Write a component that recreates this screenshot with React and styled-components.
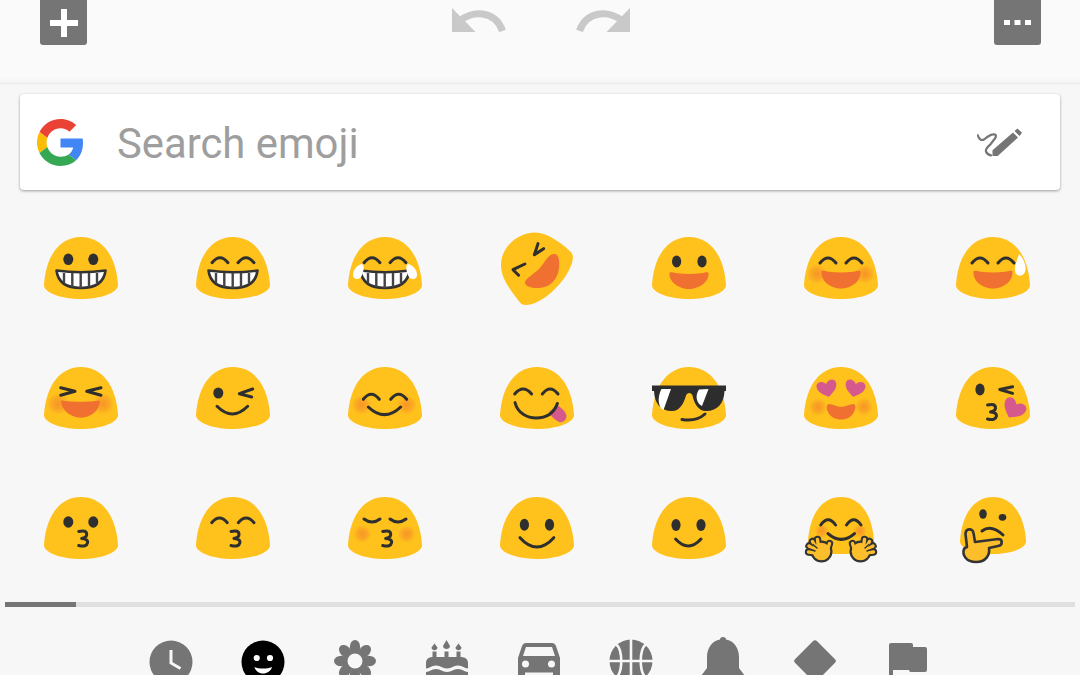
import React, { useId } from 'react';
import styled, { createGlobalStyle } from 'styled-components';

const DARK = '#2f2f2f';
const ORANGE = '#ef7030';
const PINK = '#d6598e';
const YELLOW = '#ffc11c';

const GlobalStyle = createGlobalStyle`
  html, body {
    margin: 0;
    padding: 0;
    background: #f7f7f7;
    overflow: hidden;
  }
`;

const Page = styled.div`
  width: 1080px;
  height: 675px;
  overflow: hidden;
  background: #f7f7f7;
  font-family: Roboto, "Liberation Sans", sans-serif;
`;

const Toolbar = styled.header`
  height: 83px;
  box-sizing: border-box;
  padding: 0 39px 0 40px;
  display: flex;
  justify-content: space-between;
  align-items: flex-start;
  background: linear-gradient(#fafafa 92%, #f4f4f4);
  box-shadow: 0 1px 1px rgba(0, 0, 0, 0.05);
`;

const ToolButton = styled.div`
  width: 47px;
  height: 45px;
  display: flex;
  align-items: center;
  justify-content: center;
  background: #757575;
  border-radius: 0 0 3px 3px;
`;

const HistoryGroup = styled.div`
  display: flex;
  gap: 70px;
  padding-top: 8px;
`;

const HistoryIcon = styled.svg`
  width: 54px;
  height: 24px;
  display: block;
  transform: ${p => (p.$flip ? 'scaleX(-1)' : 'none')};
`;

const SearchCard = styled.div`
  height: 96px;
  margin: 11px 20px 0;
  padding: 0 37px 0 17px;
  display: flex;
  align-items: center;
  background: #fff;
  border-radius: 4px;
  box-shadow: 0 1px 3px rgba(0, 0, 0, 0.38);
`;

const GoogleMark = styled.svg`
  width: 47px;
  height: 47px;
  flex: none;
`;

const SearchText = styled.span`
  flex: 1;
  margin-left: 33px;
  padding-top: 2px;
  font-size: 41.8px;
  color: #9e9e9e;
`;

const HandwriteIcon = styled.svg`
  width: 46px;
  height: 29px;
  flex: none;
`;

const EmojiGrid = styled.div`
  margin-top: 13px;
  padding-left: 5px;
  display: grid;
  grid-template-columns: repeat(7, 152px);
  grid-auto-rows: 130px;
`;

const EmojiCell = styled.div`
  display: flex;
  align-items: center;
  justify-content: center;
`;

const EmojiSvg = styled.svg`
  width: 74px;
  height: 62px;
  overflow: visible;
`;

const ScrollTrack = styled.div`
  height: 5px;
  margin: 9px 5px 0;
  background: #e0e0e0;
`;

const ScrollThumb = styled.div`
  width: 71px;
  height: 5px;
  background: #757575;
`;

const TabBar = styled.nav`
  margin-top: 33px;
  padding-right: 2px;
  display: flex;
  justify-content: center;
`;

const Tab = styled.div`
  width: 92px;
  display: flex;
  justify-content: center;
`;

const TabIcon = styled.svg`
  width: 44px;
  height: 44px;
  overflow: visible;
  flex: none;
  fill: ${p => (p.$active ? '#000' : '#757575')};
`;

const BODY = 'M37 0C57 0 72 17 74 48C74 56 56 62 37 62C18 62 0 56 0 48C2 17 17 0 37 0Z';

const Line = ({ d, w = 3 }) => (
  <path d={d} fill="none" stroke={DARK} strokeWidth={w} strokeLinecap="round" strokeLinejoin="round" />
);

const Eye = ({ x, y = 22.5, rx = 5, ry = 5.8 }) => <ellipse cx={x} cy={y} rx={rx} ry={ry} fill={DARK} />;

const Arc = ({ x1, x2, y = 25.7, h = 5 }) => <Line d={`M${x1} ${y}Q${(x1 + x2) / 2} ${y - 2 * h} ${x2} ${y}`} />;

const HappyEyes = ({ y }) => (
  <>
    <Arc x1={16} x2={32} y={y} />
    <Arc x1={42} x2={58} y={y} />
  </>
);

const Smile = ({ x1, x2, y, bottom }) => (
  <Line w={3} d={`M${x1} ${y}Q${(x1 + x2) / 2} ${2 * bottom - y} ${x2} ${y}`} />
);

const Blush = ({ x, y = 37, r = 10 }) => {
  const id = useId().replace(/\W/g, '');
  return (
    <>
      <radialGradient id={id}>
        <stop offset="0%" stopColor="#f58b2a" stopOpacity="0.8" />
        <stop offset="50%" stopColor="#f58b2a" stopOpacity="0.5" />
        <stop offset="100%" stopColor="#f58b2a" stopOpacity="0" />
      </radialGradient>
      <circle cx={x} cy={y} r={r} fill={`url(#${id})`} />
    </>
  );
};

const Blushes = ({ x1 = 13, x2 = 61, y, r }) => (
  <>
    <Blush x={x1} y={y} r={r} />
    <Blush x={x2} y={y} r={r} />
  </>
);

const GrinMouth = () => (
  <>
    <path d="M12.5 33.5Q37 37 61.5 33.5C60 46 50 51 37 51C24 51 14 46 12.5 33.5Z" fill="#fff" stroke="#333" strokeWidth="2.6" strokeLinejoin="round" />
    <path d="M20 36V46M28.3 36V50M36.7 36V51M45 36V50M53 36V46" stroke="#444" strokeWidth="2.4" />
  </>
);

const OpenMouth = ({ y = 35.5, bottom = 52 }) => (
  <path
    d={`M17.5 ${y + 1}C17.5 ${y - 1} 20 ${y} 25 ${y + 0.8}Q37 ${y + 2} 49 ${y + 0.8}C54 ${y} 56.5 ${y - 1} 56.5 ${y + 1}C57 ${bottom - 7} 47 ${bottom} 37 ${bottom}C27 ${bottom} 17 ${bottom - 7} 17.5 ${y + 1}Z`}
    fill={ORANGE}
  />
);

const Three = ({ x = 38.7, y = 41.5 }) => (
  <Line d={`M${x - 4} ${y - 7}Q${x + 4} ${y - 9} ${x + 4} ${y - 4}Q${x + 4} ${y - 1} ${x - 1} ${y}Q${x + 5} ${y} ${x + 5} ${y + 4}Q${x + 4} ${y + 9} ${x - 4} ${y + 7}`} />
);

const Heart = ({ x, y, angle = 0, scale = 1 }) => (
  <path
    transform={`translate(${x} ${y}) rotate(${angle}) scale(${scale})`}
    d="M0 9C-4 6 -10 3 -10 -3C-10 -8 -3 -9 0 -4C3 -9 10 -8 10 -3C10 3 4 6 0 9Z"
    fill={PINK}
  />
);

const Face = ({ children }) => (
  <>
    <path d={BODY} fill={YELLOW} />
    {children}
  </>
);

const FINGERS = ['M15 54L13.5 42.5', 'M14 54L8.5 44.5', 'M14 55L5 49', 'M14 56L4.5 55', 'M22 57L25.5 46.5'];

const HugHand = ({ flip }) => (
  <g transform={flip ? 'translate(74 0) scale(-1 1)' : undefined} fill="none" strokeLinecap="round">
    <path d={FINGERS.join('')} stroke="#333" strokeWidth="7.4" />
    <circle cx="17.5" cy="54.5" r="11" fill="#333" />
    <path d={FINGERS.join('')} stroke="#fdbe2c" strokeWidth="3.4" />
    <circle cx="17.5" cy="54.5" r="8.8" fill="#fdbe2c" />
    <path d="M9 47.5L13 51M5.5 52L11 54" stroke="#333" strokeWidth="1.4" />
  </g>
);

const EMOJIS = [
  <Face><Eye x={24.3} y={22.3} /><Eye x={49.3} y={22.3} /><GrinMouth /></Face>,
  <Face><HappyEyes /><GrinMouth /></Face>,
  <Face>
    <HappyEyes />
    <GrinMouth />
    <path d="M14 27C17 28 15.5 36 13 40C11 43 5 43 5 38C5 33 9 28 14 27Z" fill="#fff" />
    <path d="M60 27C57 28 58.5 36 61 40C63 43 69 43 69 38C69 33 65 28 60 27Z" fill="#fff" />
  </Face>,
  <>
    <path d="M35 -4.5C48 -4.5 64 8 71 15C75 20 72 27 68 35C60 50 40 68 26 68C22 68 20 66 18 63C8 50 1 40 1 28C1 10 18 -4.5 35 -4.5Z" fill={YELLOW} />
    <path d="M55 17C60 18 60 28 58 36C55 46 47 51 38 51C30 51 24 48 25 45C26 41 34 37 39 32C45 26 48 16 55 17Z" fill={ORANGE} />
    <Line d="M38 6.6L34.4 17.8L43.6 11.7" />
    <Line d="M24.9 27L13 32.7L18.6 38.2" />
  </>,
  <Face><Eye x={24.6} y={24.4} rx={4.6} ry={6} /><Eye x={50} y={24.4} rx={4.6} ry={6} /><OpenMouth /></Face>,
  <Face><Blushes x1={13} x2={61} y={37} /><HappyEyes y={26} /><OpenMouth y={34} bottom={51.5} /></Face>,
  <Face>
    <HappyEyes y={26} />
    <OpenMouth y={34} bottom={51.5} />
    <path d="M63 17C68 22 71 30 69 35C67 40 60 40 59 34C58 28 62 22 63 17Z" fill="#fff" />
  </Face>,

  <Face>
    <Blushes x1={14} x2={59} y={37} r={11} />
    <Line d="M16.7 20.7L31 24.3L16.7 28.3" />
    <Line d="M57 20.7L42.7 24.3L57 28.3" />
    <path d="M17 33.5Q37 36 56 33.5C56 43 47 50.7 37 50.7C27 50.7 17 43 17 33.5Z" fill={ORANGE} />
  </Face>,
  <Face>
    <Eye x={22.3} y={26} rx={5} ry={5.6} />
    <Line d="M56.7 22L43.3 26.7L55.7 30" />
    <Smile x1={21} x2={51.7} y={39.3} bottom={47} />
  </Face>,
  <Face>
    <Blushes x1={13.7} x2={58.7} y={38} />
    <Arc x1={15.3} x2={31.3} y={32.3} />
    <Arc x1={42.7} x2={58.7} y={32.3} />
    <Smile x1={20.3} x2={52.7} y={40} bottom={47.7} />
  </Face>,
  <Face>
    <Arc x1={14.7} x2={31.6} y={27} h={5} />
    <Arc x1={42.3} x2={58} y={27} h={5} />
    <path d="M57 38C60 40 66 44 66.5 49C66.5 53 62.5 56 59.5 55C56 54 51 49 48.5 45.5Z" fill={PINK} />
    <Line d="M15 35.6C18 47 28 51 36 51C46 51 54 46 57.4 36.5" />
  </Face>,
  <Face>
    <path d="M0 18.5H74V24H72.5C72 36 66 44 54 44C46 44 42 36 40.5 28.5C39.5 25 35 25 34 28.5C32 36 28 44 20 44C8 44 2.5 36 2 24H0Z" fill="#2d2d2d" />
    <path d="M9.5 22L19 22L11.5 43C6 41 5 30 9.5 22Z" fill="#fff" />
    <path d="M47 22.5L56.5 22L50 39C44 36 43 28 47 22.5Z" fill="#fff" />
    <Line d="M30 52.5Q44 55 53 47" />
  </Face>,
  <Face>
    <Blushes x1={14} x2={60} y={40} r={9} />
    <Heart x={23} y={21} angle={-12} />
    <Heart x={51} y={21} angle={12} />
    <path d="M25 37C29 37 33 40 37 40C41 40 46 37 49.5 37C52 37 52 41 50 45C48 50 42 52.5 37 52.5C32 52.5 26 50 24 45C22 41 22.5 37 25 37Z" fill={ORANGE} />
  </Face>,
  <Face>
    <Eye x={24} y={22.5} rx={4.6} ry={6} />
    <Line d="M56.6 19.7L43.8 22.5L56.6 26.4" />
    <Three x={35.5} y={45} />
    <Heart x={58} y={41.5} angle={30} scale={1.15} />
  </Face>,

  <Face><Eye x={24.3} y={25} /><Eye x={49.3} y={25} /><Three /></Face>,
  <Face><Arc x1={15.7} x2={31.3} h={4.7} /><Arc x1={42.3} x2={58} h={4.7} /><Three x={39} /></Face>,
  <Face>
    <Blushes x1={14.3} x2={58.7} y={37} r={9} />
    <Arc x1={16} x2={32} y={22} h={-3} />
    <Arc x1={42} x2={58} y={22} h={-3} />
    <Three />
  </Face>,
  <Face><Eye x={24.4} y={27.8} rx={4.6} ry={6} /><Eye x={49.5} y={27.8} rx={4.6} ry={6} /><Smile x1={20} x2={53.8} y={40.7} bottom={50} /></Face>,
  <Face><Eye x={24} y={28} rx={4.6} ry={6} /><Eye x={49} y={28} rx={4.6} ry={6} /><Smile x1={23.6} x2={49} y={42} bottom={49} /></Face>,
  <>
    <path transform="translate(4 0) scale(0.892 0.92)" d={BODY} fill={YELLOW} />
    <Blushes x1={17.8} x2={56} y={34} r={7} />
    <Arc x1={16.7} x2={31.6} y={28} h={5.3} />
    <Arc x1={42.5} x2={57} y={28} h={5.3} />
    <Smile x1={24} x2={50.5} y={36.6} bottom={42.4} />
    <HugHand />
    <HugHand flip />
  </>,
  <>
    <path transform="translate(4 0) scale(0.892 0.92)" d={BODY} fill={YELLOW} />
    <Eye x={27} y={17} rx={3.8} ry={4.8} />
    <Eye x={46.5} y={20.3} rx={3.8} ry={3.4} />
    <Line d="M26 34Q35 27 47 38" />
    <path
      d="M11 50L9.5 37C9.5 31 17 31 17.5 36L19 45L42 42C47 42 47 48 42 49L33 51C34 58 30 65 20 65C10 65 6 58 8 52C8.5 51 10 50.5 11 50Z"
      fill="#fdbe2c"
      stroke="#333"
      strokeWidth="2.6"
      strokeLinejoin="round"
    />
  </>,
];

const BG = '#f7f7f7';

const ClockIcon = () => (
  <TabIcon viewBox="0 0 44 44">
    <circle cx="22" cy="22" r="21.5" />
    <path d="M22 10V23L31.5 28.5" fill="none" stroke={BG} strokeWidth="3" />
  </TabIcon>
);

const SmileIcon = () => (
  <TabIcon $active viewBox="0 0 44 44">
    <circle cx="22" cy="22" r="21.5" />
    <circle cx="15.7" cy="18" r="3.1" fill="#fff" />
    <circle cx="29" cy="18" r="3.1" fill="#fff" />
    <path d="M13.5 27C18 29 26 29 31 27C30 31 26 33.5 22 33.5C18 33.5 14.5 31 13.5 27Z" fill="#fff" />
  </TabIcon>
);

const FlowerIcon = () => (
  <TabIcon viewBox="0 0 44 44">
    {[0, 45, 90, 135, 180, 225, 270, 315].map(a => (
      <ellipse key={a} cx="22" cy="7.2" rx="5.2" ry="7.2" transform={`rotate(${a} 22 21)`} />
    ))}
    <circle cx="22" cy="21" r="9.5" />
    <circle cx="22" cy="21" r="7.5" fill={BG} />
  </TabIcon>
);

const CakeIcon = () => (
  <TabIcon viewBox="0 0 44 44">
    <path d="M9.5 3.5L12.5 7.5C12.5 11 6.5 11 6.5 7.5ZM21.5 0L25 6C25 10 18 10 18 6ZM33.5 3.5L36.5 7.5C36.5 11 30.5 11 30.5 7.5Z" />
    <path d="M7.5 11.5H11.5V17H19.5V11.5H23.5V17H31.5V11.5H35.5V17C40 17 43 19 43 23V28.5C39 28.5 38 25.5 33 25.5C28 25.5 27 28.5 22 28.5C17 28.5 16 25.5 11 25.5C6 25.5 5 28.5 1 28.5V23C1 19 4 17 7.5 17Z" />
    <path d="M1 32C5 32 6 29 11 29C16 29 17 32 22 32C27 32 28 29 33 29C38 29 39 32 43 32V44H1Z" />
  </TabIcon>
);

const CarIcon = () => (
  <TabIcon viewBox="0 0 44 44">
    <path d="M9 3H35C37 3 38 4 39 6L43 18V44H1V18L5 6C6 4 7 3 9 3Z" />
    <path d="M9 7H35L38 16H6Z" fill={BG} />
    <circle cx="8.5" cy="24" r="3.5" fill={BG} />
    <circle cx="34.5" cy="24" r="3.5" fill={BG} />
    <path d="M8 32.5H36V35H8Z" fill={BG} />
  </TabIcon>
);

const BallIcon = () => (
  <TabIcon viewBox="0 0 44 44">
    <circle cx="22" cy="21" r="21.5" />
    <path d="M22 -1V43M0 21H44M7 4C14 10 14 32 7 38M37 4C30 10 30 32 37 38" fill="none" stroke={BG} strokeWidth="2.6" />
  </TabIcon>
);

const BellIcon = () => (
  <TabIcon viewBox="0 0 44 44">
    <path d="M22 -3C24 -3 25 -2 25 -0.5C33 1 38 8 38 17V28L44 36V40H0V36L6 28V17C6 8 11 1 19 -0.5C19 -2 20 -3 22 -3Z" />
  </TabIcon>
);

const DiamondIcon = () => (
  <TabIcon viewBox="0 0 44 44">
    <rect x="6.5" y="5.5" width="31" height="31" rx="3" transform="rotate(45 22 21)" />
  </TabIcon>
);

const FlagIcon = () => (
  <TabIcon viewBox="0 0 44 44">
    <path d="M6 3H26Q28 3 28 5V7H40Q42 7 42 9V30Q42 32 40 32H26Q24 32 24 30H8V44H4V5Q4 3 6 3Z" />
  </TabIcon>
);

const TABS = [ClockIcon, SmileIcon, FlowerIcon, CakeIcon, CarIcon, BallIcon, BellIcon, DiamondIcon, FlagIcon];

const HistoryArrow = ({ flip }) => (
  <HistoryIcon $flip={flip} viewBox="0 0 54 24">
    <path d="M0 0V24H23.5Z" fill="#c9c9c9" />
    <path d="M8 13C18 3 43 1 50.5 23" fill="none" stroke="#c9c9c9" strokeWidth="7" />
  </HistoryIcon>
);

export default function App() {
  return (
    <Page>
      <GlobalStyle />
      <Toolbar>
        <ToolButton>
          <svg width="28" height="28" viewBox="0 0 28 28">
            <path d="M11 0H17V11H28V17H17V28H11V17H0V11H11Z" fill="#fff" />
          </svg>
        </ToolButton>
        <HistoryGroup>
          <HistoryArrow />
          <HistoryArrow flip />
        </HistoryGroup>
        <ToolButton>
          <svg width="27" height="5" viewBox="0 0 27 5">
            <path d="M0 0H6V5H0ZM10.5 0H16.5V5H10.5ZM21 0H27V5H21Z" fill="#fff" />
          </svg>
        </ToolButton>
      </Toolbar>

      <SearchCard>
        <GoogleMark viewBox="0 0 48 48">
          <path fill="#EA4335" d="M24 9.5c3.54 0 6.71 1.22 9.21 3.6l6.85-6.85C35.9 2.38 30.47 0 24 0 14.62 0 6.51 5.38 2.56 13.22l7.98 6.19C12.43 13.72 17.74 9.5 24 9.5z" />
          <path fill="#4285F4" d="M46.98 24.55c0-1.57-.15-3.09-.38-4.55H24v9.02h12.94c-.58 2.96-2.26 5.48-4.78 7.18l7.73 6c4.51-4.18 7.09-10.36 7.09-17.65z" />
          <path fill="#FBBC05" d="M10.53 28.59c-.48-1.45-.76-2.99-.76-4.59s.27-3.14.76-4.59l-7.98-6.19C.92 16.46 0 20.12 0 24c0 3.88.92 7.54 2.56 10.78l7.97-6.19z" />
          <path fill="#34A853" d="M24 48c6.48 0 11.93-2.13 15.89-5.81l-7.73-6c-2.15 1.45-4.92 2.3-8.16 2.3-6.26 0-11.57-4.22-13.47-9.91l-7.98 6.19C6.51 42.62 14.62 48 24 48z" />
        </GoogleMark>
        <SearchText>Search emoji</SearchText>
        <HandwriteIcon viewBox="0 0 46 29">
          <path d="M0.8 7.3C2 11 4 13 7 11.5C10 9 15 5.5 18 6.5C21 8 16 12.5 14 15.7C11 18.5 8 21 9 23.5C10 26 12 27 14 27.3" fill="none" stroke="#757575" strokeWidth="2.2" strokeLinecap="round" />
          <path d="M15.5 22.3L36 4.5L41 9.5L20.7 28H15.5ZM37.5 3L40.5 0.5L45 4.7L42.5 8Z" fill="#757575" />
        </HandwriteIcon>
      </SearchCard>

      <EmojiGrid>
        {EMOJIS.map((emoji, i) => (
          <EmojiCell key={i}>
            <EmojiSvg viewBox="0 0 74 62">{emoji}</EmojiSvg>
          </EmojiCell>
        ))}
      </EmojiGrid>

      <ScrollTrack>
        <ScrollThumb />
      </ScrollTrack>

      <TabBar>
        {TABS.map((Icon, i) => (
          <Tab key={i}>
            <Icon />
          </Tab>
        ))}
      </TabBar>
    </Page>
  );
}
